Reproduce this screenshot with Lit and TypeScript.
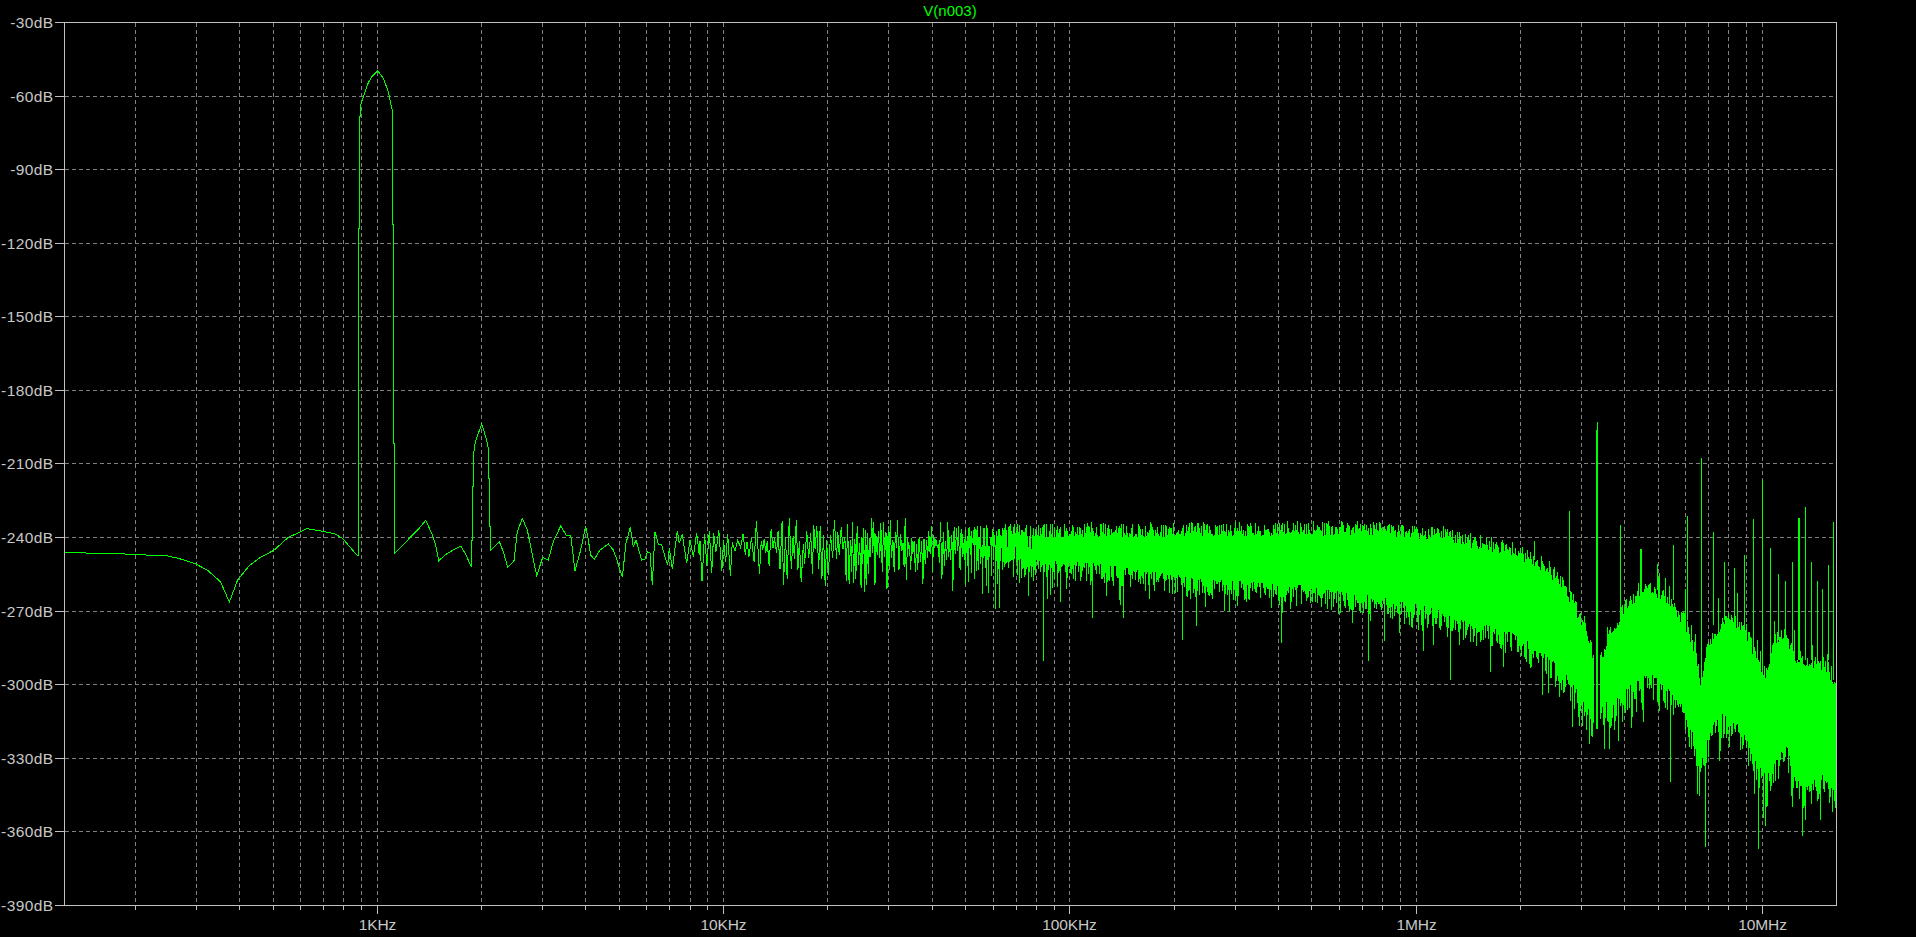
import { LitElement, css, html, svg } from "lit";
import { customElement } from "lit/decorators.js";

const LEFT = 64, RIGHT = 1836, TOP = 22, BOTTOM = 905;
const rowOf = (k: number) => Math.round(TOP + k * 73.58);
const colOf = (f: number) => Math.floor(377.3 + 346.3 * (Math.log10(f) - 3));

// Hand-traced low-frequency part of the spectrum [x, y]
const TRACE: number[][] = [
  [64.5,552.3],[85.7,553],[118.4,553.7],[146,555],[166.5,555.7],[179.6,558.7],[196,564],[208,570.7],[220.4,581.7],[229.4,602],
  [237.6,580],[249,566],[259,558.3],[274.3,550],[287.8,537.7],[307,528.7],[322.4,531.3],[334.7,533.7],[342.9,538.7],[357,555.3],
  [358.5,555.3],[358.5,228],[359.5,228],[359.5,116],[360.5,116],[361,104],[363.3,96.7],[368.3,82.7],[372,76.5],[377.7,70.7],[383.3,78.3],[388.3,91.7],[392.5,111.7],
  [392.5,224],[393.5,224],[393.5,443],[394.5,443],[394.5,553.3],
  [412.7,535],[418.3,529.3],[425.7,520.3],[431.7,533.3],[435.7,545],[438.7,560.7],[447.3,553.3],[460.7,546],[466,555],[471.5,567.3],
  [471.5,540],[472.5,540],[472.5,486.7],[473.5,486.7],[473.5,455],[475.3,441.7],[481.7,424],[486.7,440],[488.5,450],[488.5,478.3],[489.5,478.3],[489.5,526],[490.5,526],[490.5,550.7],
  [499.3,541.7],[503.3,551.7],[507.7,567.3],[514,560.7],[517.3,531.7],[522.3,518.3],[527.3,530],[531.7,551.7],[536.7,575.7],[542.7,557.3],
  [548.3,560],[553.3,541.7],[560.7,526],[566,535],[570.7,535.3],[575,570.7],[580.7,550],[585.7,526],[588.3,540],[590.7,555],
  [594.3,559.3],[600,550],[608.3,544],[613.3,550],[616.7,559.3],[622.3,577.3],[626,543.3],[630.3,527.3],[633.3,546.7],[636,540],
  [641.7,560],[645,559.3],[647.3,551.7],[650,552.7],[652.3,585.3],[655,531.7],[658.3,544],[661.7,545],[666,560],[667.7,565],
  [669.3,548.3],[672.3,569.3],[677.3,530.7],[679.3,543.3],[682.3,534.3],[686.7,563.3],[690,540],[693.3,556.7],[696.7,533.3],[699.3,555],
];

const DENSE_START = 960;
const UP: number[][] = [[960,521],[1390,517],[1400,520],[1440,522],[1470,530],[1510,537],[1540,552],[1560,568],[1575,595],[1590,630],[1594,660],[1600,650],[1610,620],[1625,596],[1640,580],[1655,579],[1670,591],[1685,611],[1695,641],[1700,668],[1708,635],[1720,613],[1730,606],[1745,618],[1755,644],[1765,661],[1775,629],[1785,622],[1795,645],[1810,651],[1825,654],[1836,671]];
const LO: number[][] = [[960,552],[1000,558],[1090,562],[1200,578],[1300,585],[1400,600],[1440,610],[1470,620],[1500,627],[1530,642],[1550,658],[1570,678],[1585,706],[1594,715],[1600,705],[1612,697],[1630,684],[1650,672],[1670,690],[1685,708],[1695,742],[1700,764],[1705,745],[1712,720],[1725,712],[1740,724],[1750,738],[1760,768],[1772,762],[1785,742],[1795,772],[1805,785],[1820,772],[1835,790]];

// [col, y1, y2, width]
const SPIKES: number[][] = [
  [1569,511,592,1],[1597,422,729,1],[1596,430,729,2],[1620,525,600,1],[1640,549,590,2],[1657,564,590,1],[1673,545,600,1],[1687,516,620,1],[1701,458,695,1],
  [1713,532,625,1],[1724,562,620,1],[1734,568,620,1],[1744,555,630,1],[1753,519,650,1],[1762,480,670,1],[1770,548,645,1],[1778,574,640,1],[1785,581,640,1],
  [1792,562,660,1],[1798,518,660,2],[1805,507,660,1],[1811,562,660,1],[1817,581,660,1],[1822,589,660,1],[1828,565,660,1],[1833,522,680,1],[1534,541,560,1],[1549,561,575,1],
  [1450,600,680,1],[1490,600,672,1],[1572,660,727,1],[1589,700,744,1],[1604,700,749,1],[1609,700,749,1],[1670,680,782,1],[1697,720,794,1],[1705,730,847,1],
  [1758,740,849,1],[1765,740,826,1],[1792,730,807,1],[1802,760,836,1],[1835,760,807,1],[1182,575,640,1],[1196,575,626,1],[1281,580,643,1],[1368,590,661,1],
  [1384,590,641,1],[1433,600,645,1],[1459,610,645,1],[1092,560,618,1],[1123,560,618,1],[1043,555,661,1],[995,555,609,1],[999,555,608,1],[982,555,594,1],
  [1050,555,595,1],[1060,555,602,1],
];

function lerpKeys(keys: number[][], x: number): number {
  if (x <= keys[0][0]) return keys[0][1];
  for (let i = 1; i < keys.length; i++) {
    if (x <= keys[i][0]) {
      const [a, b] = keys[i - 1];
      const [c, d] = keys[i];
      return b + ((d - b) * (x - a)) / (c - a);
    }
  }
  return keys[keys.length - 1][1];
}

function rng(seed: number) {
  return () => {
    seed |= 0;
    seed = (seed + 0x6d2b79f5) | 0;
    let t = Math.imul(seed ^ (seed >>> 15), 1 | seed);
    t = (t + Math.imul(t ^ (t >>> 7), 61 | t)) ^ t;
    return ((t ^ (t >>> 14)) >>> 0) / 4294967296;
  };
}

function buildSparse(): string {
  const r = rng(1337);
  let d = "M" + TRACE.map((p) => p[0] + " " + p[1]).join("L");
  let x = 700;
  let up = true;
  while (x < DENSE_START) {
    const step = x < 760 ? 2.4 : x < 850 ? 1.8 : 1.15;
    const c = 545;
    const y = up
      ? c - Math.pow(r(), 1.1) * 28
      : c + 2 + Math.pow(r(), 1.4) * 46;
    d += `L${x.toFixed(1)} ${y.toFixed(1)}`;
    x += step * (0.7 + r() * 0.6);
    up = !up;
  }
  return d;
}

function buildDense(): string {
  const r = rng(4242);
  let d = "";
  for (let c = DENSE_START; c <= RIGHT; c++) {
    if (c >= 1594 && c <= 1599) continue;
    const right = c > 1600;
    let top = lerpKeys(UP, c) + 3 + Math.pow(r(), 0.9) * 15;
    if (r() < (right ? 0.12 : 0.06)) top -= r() * (right ? 34 : 8);
    let bottom = lerpKeys(LO, c) + Math.pow(r(), 1.3) * (c > 1400 ? 26 : 20);
    if (r() < (right ? 0.22 : 0.14)) bottom += r() * (right ? 36 : 24);
    // thin, fragmented columns near the sparse end of the trace
    if (c < 1040 && r() < (1040 - c) / 130) {
      if (r() < 0.5) top = lerpKeys(LO, c) - 8 - r() * 6;
      else bottom = lerpKeys(UP, c) + 22 + r() * 6;
    }
    d += `M${c + 0.5} ${top.toFixed(1)}V${bottom.toFixed(1)}`;
  }
  for (const [col, y1, y2, w] of SPIKES) {
    for (let i = 0; i < w; i++) d += `M${col + i + 0.5} ${y1}V${y2}`;
  }
  return d;
}

const FREQS: number[] = [];
for (let dec = 100; dec <= 10000000; dec *= 10) {
  for (let m = 1; m <= 9; m++) {
    const f = dec * m;
    const col = colOf(f);
    if (col > LEFT && col < RIGHT) FREQS.push(f);
  }
}

const X_LABELS: [number, string][] = [
  [1e3, "1KHz"],
  [1e4, "10KHz"],
  [1e5, "100KHz"],
  [1e6, "1MHz"],
  [1e7, "10MHz"],
];

@customElement("app-root")
export class AppRoot extends LitElement {
  static styles = css`
    :host {
      display: block;
      width: 1916px;
      height: 937px;
      background: #000;
      overflow: hidden;
    }
    svg {
      display: block;
    }
    .axis {
      stroke: #c0c0c0;
      stroke-width: 1;
      fill: none;
      shape-rendering: crispEdges;
    }
    .grid {
      stroke: #808080;
      stroke-width: 1;
      stroke-dasharray: 4 3;
      shape-rendering: crispEdges;
    }
    .trace {
      stroke: #00ff00;
      stroke-width: 1;
      fill: none;
      shape-rendering: crispEdges;
      stroke-linejoin: miter;
    }
    text {
      font-family: "Liberation Sans", Arial, sans-serif;
      font-size: 15.5px;
      fill: #c8c8c8;
    }
    .ylabel {
      text-anchor: end;
      letter-spacing: 0.4px;
    }
    .xlabel {
      text-anchor: middle;
      letter-spacing: -0.1px;
    }
    .title {
      text-anchor: middle;
      fill: #00ff00;
      font-size: 15px;
    }
  `;

  private sparse = buildSparse();
  private dense = buildDense();

  render() {
    const rows = Array.from({ length: 13 }, (_, k) => k);
    return html`<svg width="1916" height="937" viewBox="0 0 1916 937" xmlns="http://www.w3.org/2000/svg">
      ${rows.slice(1, 12).map(
        (k) => svg`<line class="grid" x1=${LEFT + 1} x2=${RIGHT} y1=${rowOf(k) + 0.5} y2=${rowOf(k) + 0.5}></line>`
      )}
      ${FREQS.map(
        (f) => svg`<line class="grid" x1=${colOf(f) + 0.5} x2=${colOf(f) + 0.5} y1=${TOP + 1} y2=${BOTTOM}></line>`
      )}
      <path class="trace" d=${this.sparse}></path>
      <path class="trace" d=${this.dense}></path>
      <path class="axis" d="M${LEFT + 0.5} ${TOP + 0.5}H${RIGHT + 0.5}V${BOTTOM + 0.5}H${LEFT + 0.5}Z"></path>
      ${rows.map(
        (k) => svg`<line class="axis" x1="55" x2=${LEFT} y1=${rowOf(k) + 0.5} y2=${rowOf(k) + 0.5}></line>
          <text class="ylabel" x="53.5" y=${rowOf(k) + 6}>-${30 + k * 30}dB</text>`
      )}
      ${FREQS.map((f) => {
        const major = Math.abs(Math.log10(f) % 1) < 1e-9;
        return svg`<line class="axis" x1=${colOf(f) + 0.5} x2=${colOf(f) + 0.5} y1=${BOTTOM} y2=${BOTTOM + (major ? 9 : 5)}></line>`;
      })}
      ${X_LABELS.map(
        ([f, t]) => svg`<text class="xlabel" x=${colOf(f) + 0.5} y="930">${t}</text>`
      )}
      <text class="title" x="950" y="15.5">V(n003)</text>
    </svg>`;
  }
}
